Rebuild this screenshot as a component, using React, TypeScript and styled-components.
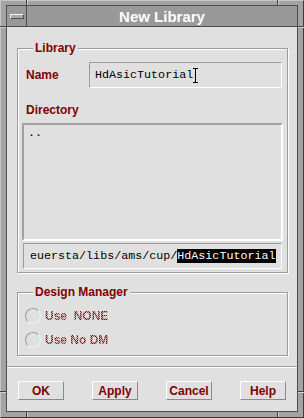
import React from "react"
import styled, { createGlobalStyle } from "styled-components"

const GlobalStyle = createGlobalStyle`
  html, body {
    margin: 0;
    padding: 0;
    background: #ffffff;
  }
  body {
    font-family: "Liberation Sans", Arial, sans-serif;
  }
  * {
    box-sizing: border-box;
  }
`

const MAROON = "#800000"
const PANEL = "#e0e0e0"
const SHADE = "#9c9c9c"

const Window = styled.div`
  position: relative;
  width: 304px;
  height: 418px;
  display: flex;
  background: #a3a3a3;
  border: 1px solid;
  border-color: #c6c6c6 #3a3a3a #3a3a3a #c6c6c6;
  padding: 4px 5px 5px 5px;
`

const Notch = styled.span<{ $x: number; $y: number; $vertical?: boolean }>`
  position: absolute;
  left: ${(p) => p.$x - 1}px;
  top: ${(p) => p.$y - 1}px;
  width: ${(p) => (p.$vertical ? 2 : 6)}px;
  height: ${(p) => (p.$vertical ? 5 : 2)}px;
  ${(p) =>
    p.$vertical
      ? "border-left: 1px solid #404040; border-right: 1px solid #d0d0d0;"
      : "border-top: 1px solid #404040; border-bottom: 1px solid #d0d0d0;"}
`

const Inner = styled.div`
  flex: 1;
  display: flex;
  flex-direction: column;
  border: 1px solid #4e4e4e;
  background: ${PANEL};
`

const TitleBar = styled.div`
  height: 21px;
  display: flex;
  background: #999999;
  border-bottom: 1px solid #4e4e4e;
`

const MenuButton = styled.div`
  width: 20px;
  display: flex;
  align-items: center;
  justify-content: center;
  border-right: 1px solid #4e4e4e;
`

const MenuBar = styled.span`
  width: 14px;
  height: 5px;
  background: #a8a8a8;
  border: 1px solid;
  border-color: #f2f2f2 #505050 #505050 #f2f2f2;
`

const Title = styled.div`
  flex: 1;
  display: flex;
  align-items: center;
  justify-content: center;
  color: #ffffff;
  font-size: 15px;
  font-weight: bold;
`

const Content = styled.div`
  flex: 1;
  display: flex;
  flex-direction: column;
`

const Body = styled.div`
  display: flex;
  flex-direction: column;
  padding: 14px 9px 0 10px;
`

const GroupBox = styled.fieldset<{ $gap?: number; $pad: string }>`
  margin: ${(p) => p.$gap ?? 0}px 0 0 0;
  padding: ${(p) => p.$pad};
  min-width: 0;
  border: 1px solid ${SHADE};
  box-shadow: 1px 1px 0 #ffffff, inset 1px 1px 0 #ffffff;
`

const Legend = styled.legend`
  margin-left: 11px;
  padding: 0 2px;
  background: ${PANEL};
  color: ${MAROON};
  font-size: 12px;
  font-weight: bold;
  line-height: 14px;
`

const Label = styled.div<{ $width?: number; $gap?: number }>`
  width: ${(p) => (p.$width ? `${p.$width}px` : "auto")};
  flex: none;
  margin-top: ${(p) => p.$gap ?? 0}px;
  padding-left: 4px;
  color: ${MAROON};
  font-size: 12px;
  font-weight: bold;
  line-height: 14px;
`

const FieldRow = styled.div`
  display: flex;
  align-items: center;
  padding: 0 1px 0 0;
`

const TextField = styled.div`
  flex: 1;
  height: 26px;
  display: flex;
  align-items: center;
  padding-left: 5px;
  border: 1px solid;
  border-color: ${SHADE} #ffffff #ffffff ${SHADE};
  font-family: "Liberation Mono", "Courier New", monospace;
  font-size: 11.7px;
  color: #000000;
  white-space: nowrap;
  overflow: hidden;
`

const Caret = styled.span`
  position: relative;
  display: inline-block;
  width: 5px;
  height: 15px;
  border-top: 1px solid #000;
  border-bottom: 1px solid #000;

  &::before {
    content: "";
    position: absolute;
    left: 2px;
    top: 0;
    bottom: 0;
    width: 1px;
    background: #000;
  }
`

const ListBox = styled.div`
  height: 118px;
  margin-top: 6px;
  padding: 1px 4px;
  border: 2px solid;
  border-color: #a0a0a0 #ffffff #ffffff #a0a0a0;
  font-family: "Liberation Mono", "Courier New", monospace;
  font-size: 11.7px;
  line-height: 14px;
  color: #000000;
`

const PathField = styled(TextField)`
  flex: none;
  margin: 2px 1px 0;
  padding-left: 6px;
  line-height: 14px;
`

const Selected = styled.span`
  background: #000000;
  color: #ffffff;
`

const RadioRow = styled.div`
  height: 24px;
  display: flex;
  align-items: center;
  gap: 4px;
  padding-left: 3px;
`

const RadioCircle = styled.span`
  width: 16px;
  height: 16px;
  border-radius: 50%;
  border: 1px solid;
  border-color: #a0a0a0 #f4f4f4 #f4f4f4 #a0a0a0;
`

const DisabledText = styled.span`
  font-size: 12px;
  font-weight: bold;
  white-space: pre;
  color: transparent;
  background-image: conic-gradient(
    ${MAROON} 0 25%,
    #c89a9a 0 50%,
    ${MAROON} 0 75%,
    #c89a9a 0
  );
  background-size: 2px 2px;
  -webkit-background-clip: text;
  background-clip: text;
`

const Separator = styled.div`
  margin-top: 10px;
  height: 2px;
  border-top: 1px solid ${SHADE};
  border-bottom: 1px solid #ffffff;
`

const ButtonRow = styled.div`
  display: flex;
  justify-content: space-between;
  padding: 13px 11px 0;
`

const Button = styled.button`
  width: 46px;
  height: 19px;
  padding: 0;
  background: ${PANEL};
  border: 1px solid;
  border-color: #ffffff #8a8a8a #8a8a8a #ffffff;
  color: ${MAROON};
  font-family: "Liberation Sans", Arial, sans-serif;
  font-size: 12px;
  font-weight: bold;
`

const notches = [
  { x: 26, y: 0, v: true },
  { x: 277, y: 0, v: true },
  { x: 26, y: 412, v: true },
  { x: 277, y: 412, v: true },
  { x: 0, y: 26, v: false },
  { x: 0, y: 391, v: false },
  { x: 298, y: 26, v: false },
  { x: 298, y: 391, v: false },
]

const App = () => {
  return (
    <>
      <GlobalStyle />
      <Window>
        {notches.map((n, i) => (
          <Notch key={i} $x={n.x} $y={n.y} $vertical={n.v} />
        ))}
        <Inner>
          <TitleBar>
            <MenuButton>
              <MenuBar />
            </MenuButton>
            <Title>New Library</Title>
          </TitleBar>
          <Content>
            <Body>
              <GroupBox $pad="7px 4px 3px">
                <Legend>Library</Legend>
                <FieldRow>
                  <Label $width={67}>Name</Label>
                  <TextField>
                    HdAsicTutorial
                    <Caret />
                  </TextField>
                </FieldRow>
                <Label $gap={15}>Directory</Label>
                <ListBox>..</ListBox>
                <PathField>
                  euersta/libs/ams/cup/<Selected>HdAsicTutorial</Selected>
                </PathField>
              </GroupBox>
              <GroupBox $gap={12} $pad="5px 4px 3px">
                <Legend>Design Manager</Legend>
                <RadioRow>
                  <RadioCircle />
                  <DisabledText>Use  NONE</DisabledText>
                </RadioRow>
                <RadioRow>
                  <RadioCircle />
                  <DisabledText>Use No DM</DisabledText>
                </RadioRow>
              </GroupBox>
            </Body>
            <Separator />
            <ButtonRow>
              <Button>OK</Button>
              <Button>Apply</Button>
              <Button>Cancel</Button>
              <Button>Help</Button>
            </ButtonRow>
          </Content>
        </Inner>
      </Window>
    </>
  )
}

export default App
